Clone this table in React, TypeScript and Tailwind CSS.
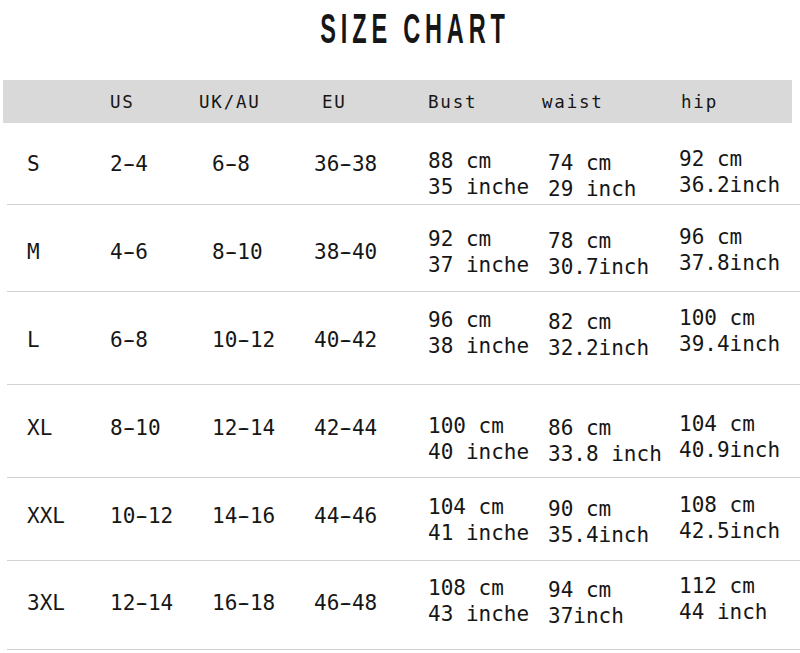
import React from "react";

type Row = {
  size: string;
  us: string;
  uk: string;
  eu: string;
  bust: [string, string];
  waist: [string, string];
  hip: [string, string];
  h: string;
  lp: string;
  mp: string;
};

const rows: Row[] = [
  { size: "S", us: "2-4", uk: "6-8", eu: "36-38", bust: ["88 cm", "35 inche"], waist: ["74 cm", "29 inch"], hip: ["92 cm", "36.2inch"], h: "h-[82px]", lp: "pt-[28px]", mp: "pt-[25px]" },
  { size: "M", us: "4-6", uk: "8-10", eu: "38-40", bust: ["92 cm", "37 inche"], waist: ["78 cm", "30.7inch"], hip: ["96 cm", "37.8inch"], h: "h-[87px]", lp: "pt-[34px]", mp: "pt-[21px]" },
  { size: "L", us: "6-8", uk: "10-12", eu: "40-42", bust: ["96 cm", "38 inche"], waist: ["82 cm", "32.2inch"], hip: ["100 cm", "39.4inch"], h: "h-[93px]", lp: "pt-[35px]", mp: "pt-[15px]" },
  { size: "XL", us: "8-10", uk: "12-14", eu: "42-44", bust: ["100 cm", "40 inche"], waist: ["86 cm", "33.8 inch"], hip: ["104 cm", "40.9inch"], h: "h-[93px]", lp: "pt-[30px]", mp: "pt-[28px]" },
  { size: "XXL", us: "10-12", uk: "14-16", eu: "44-46", bust: ["104 cm", "41 inche"], waist: ["90 cm", "35.4inch"], hip: ["108 cm", "42.5inch"], h: "h-[83px]", lp: "pt-[25px]", mp: "pt-[16px]" },
  { size: "3XL", us: "12-14", uk: "16-18", eu: "46-48", bust: ["108 cm", "43 inche"], waist: ["94 cm", "37inch"], hip: ["112 cm", "44 inch"], h: "h-[89px]", lp: "pt-[29px]", mp: "pt-[14px]" },
];

const mono = "font-['DejaVu_Sans_Mono','Liberation_Mono',monospace]";

function Range({ text }: { text: string }) {
  const [a, b] = text.split("-");
  return (
    <span className="whitespace-pre">
      {a}
      <span className="[text-shadow:2px_0_0_#161616,-2px_0_0_#161616]">-</span>
      {b}
    </span>
  );
}

function Two({ lines, extra }: { lines: [string, string]; extra: string }) {
  return (
    <div className={`whitespace-pre ${extra}`}>
      <div>{lines[0]}</div>
      <div>{lines[1]}</div>
    </div>
  );
}

export default function App() {
  return (
    <div className="w-[800px] h-[653px] bg-white text-[#161616] overflow-hidden">
      <div className="h-[80px] flex justify-center pt-[5px] pl-[30px]">
        <div className="font-['Liberation_Sans',Arial,sans-serif] font-bold text-[42px] leading-[48px] tracking-[8.6px] scale-x-[0.56] whitespace-nowrap">
          SIZE CHART
        </div>
      </div>

      <div
        className={`ml-[3px] w-[789px] h-[43px] bg-[#d9d9d9] grid grid-cols-[83px_89px_123px_106px_114px_139px_1fr] pl-[24px] items-center pt-[1px] text-[17.5px] tracking-[1.8px] ${mono}`}
      >
        <div />
        <div>US</div>
        <div>UK/AU</div>
        <div>EU</div>
        <div>Bust</div>
        <div>waist</div>
        <div>hip</div>
      </div>

      <div className={`text-[21px] leading-[26px] ${mono}`}>
        {rows.map((r) => (
          <div
            key={r.size}
            className={`ml-[7px] ${r.h} border-b border-[#d2d2d2] grid grid-cols-[83px_102px_102px_114px_120px_131px_1fr] pl-[20px]`}
          >
            <div className={r.lp}>{r.size}</div>
            <div className={r.lp}>
              <Range text={r.us} />
            </div>
            <div className={r.lp}>
              <Range text={r.uk} />
            </div>
            <div className={r.lp}>
              <Range text={r.eu} />
            </div>
            <div className={r.mp}>
              <Two lines={r.bust} extra="" />
            </div>
            <div className={r.mp}>
              <Two lines={r.waist} extra="mt-[2px]" />
            </div>
            <div className={r.mp}>
              <Two lines={r.hip} extra="-mt-[2px]" />
            </div>
          </div>
        ))}
      </div>
    </div>
  );
}
